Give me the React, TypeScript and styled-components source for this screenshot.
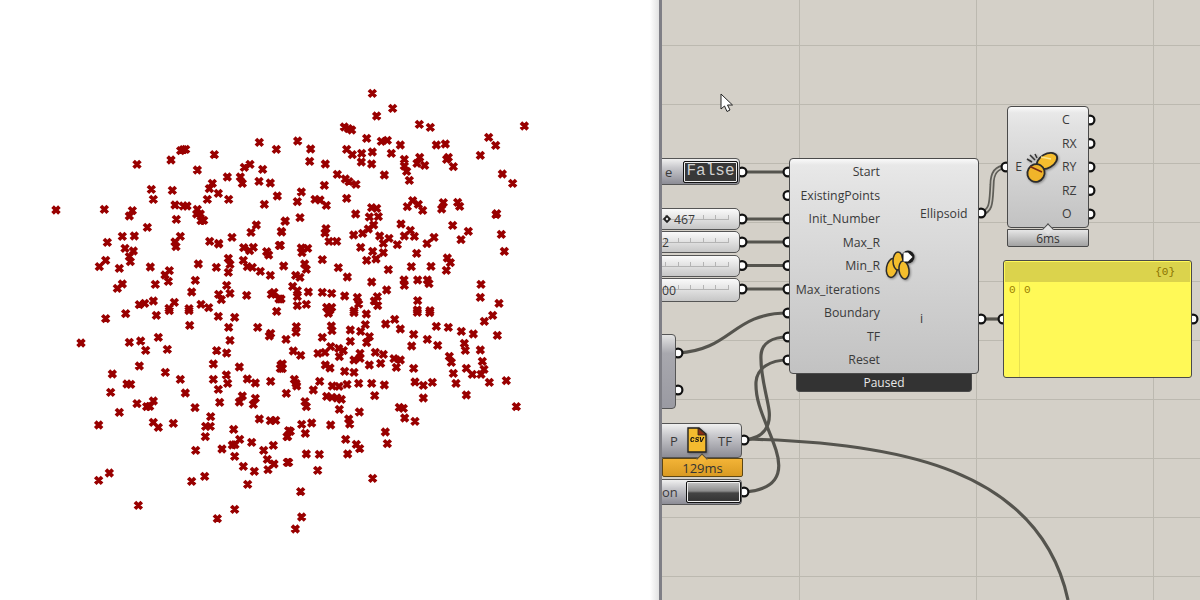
import React from "react";
import styled, { createGlobalStyle } from "styled-components";

const CANVAS_X = 662;
const LABEL_FONT = `"Open Sans", "Noto Sans", sans-serif`;

const GlobalStyle = createGlobalStyle`
  html, body {
    margin: 0;
    padding: 0;
    background: #fff;
  }
  body {
    font-family: ${LABEL_FONT};
  }
`;

// scatter points, read per quadrant: [origin x, origin y, zoomed coords at 3x]
const QUADRANTS: [number, number, string][] = [
  [40, 80, "658,187 709,208 430,209 422,212 437,208 523,224 393,240 291,253 472,270 630,253 613,262 668,268 562,291 601,291 607,310 657,304 691,309 517,310 508,326 535,340 334,328 397,331 340,358 502,358 566,358 712,348 673,373 405,375 430,378 441,378 193,388 48,390 277,392 268,408 472,388 470,402 481,402 483,422 491,421 409,418 736,423 649,435 322,442 633,457 724,454 247,469 283,468 421,469 576,472 509,484 536,490 536,492 405,486 202,487 408,500 718,496 255,505 280,513 611,503 640,502 629,512 680,515 686,525 268,530 565,535 197,541 271,545 610,541 475,552 178,560 331,561 529,562 570,553 622,560 637,562 731,558 238,565 388,572 375,585 565,577 661,574 691,586 466,601 385,604 247,612 346,613 232,625 560,616 455,636 536,643 570,640 620,646 702,637 694,643 717,657 544,659 340,663 403,667 314,670 298,674 483,673 387,685 447,686 506,683 710,694"],
  [280, 80, "277,40 338,85 290,108 418,133 451,142 733,138 193,141 205,146 215,150 626,172 53,183 260,175 304,184 322,181 361,195 469,195 496,192 647,196 92,207 200,208 217,224 245,220 277,216 334,220 601,226 373,238 419,232 89,244 136,252 244,246 275,252 373,258 411,250 434,256 500,238 505,232 520,260 380,274 172,283 313,285 667,282 196,297 207,305 228,313 388,301 698,310 133,316 64,336 52,365 105,358 120,360 139,376 200,355 398,362 415,373 382,380 428,391 490,368 485,387 533,367 539,379 275,383 290,385 227,402 650,401 648,404 295,410 268,411 60,413 15,424 518,436 363,432 281,435 138,446 135,459 391,451 265,447 565,454 5,456 248,460 221,465 299,468 327,475 373,468 403,469 462,472 664,463 147,484 170,484 543,479 441,491 352,494 310,490 1,496 64,504 83,505 242,502 66,518 278,514 310,518 410,520 673,514 127,539 260,541 288,537 502,534 511,548 74,552 11,558 175,563 394,560 453,559 79,568 325,569 499,571 47,586 60,592 202,591 275,606 372,600 373,616 413,600 442,600 447,611 603,613 38,619 320,630 52,632 85,636 127,637 155,640 194,648 232,652 292,650 601,652 52,650 3,657 413,662 236,672 283,663 79,673 52,677 293,677 657,670 140,682 155,682 150,690 222,692 412,690 450,692"],
  [40, 310, "197,26 257,11 349,16 388,2 447,2 535,19 584,22 449,46 566,52 653,52 692,70 688,78 123,99 268,97 302,93 355,82 738,88 570,91 317,121 382,118 530,122 560,129 298,168 520,162 598,171 723,165 721,175 217,192 376,187 559,195 421,208 520,208 622,207 646,219 692,214 563,220 261,222 272,223 212,247 436,249 535,238 739,250 607,258 646,265 598,276 640,283 340,273 291,281 320,290 329,289 539,277 465,293 238,307 512,320 658,327 691,332 707,331 176,345 340,337 355,352 400,340 497,349 511,349 581,358 496,380 746,362 741,380 599,388 635,397 577,405 585,404 700,406 467,421 546,417 671,421 584,439 682,448 702,462 742,457 610,469 643,484 684,479 208,489 176,511 494,499 455,514 623,523 295,586 584,598 532,626"],
  [280, 310, "145,10 222,8 259,12 412,7 449,8 638,16 613,34 344,28 317,42 361,57 469,49 505,52 544,64 580,72 49,50 48,67 154,48 156,62 211,60 242,64 256,44 652,76 401,73 18,88 127,82 211,94 268,80 260,98 442,88 553,100 395,108 473,106 556,121 601,120 152,110 176,115 40,123 62,136 114,130 135,127 190,122 178,140 286,127 310,133 508,139 514,157 607,154 240,130 222,150 240,145 342,146 361,150 268,165 302,160 136,165 150,174 7,162 7,176 349,172 401,175 612,178 194,184 222,187 559,175 577,193 603,193 520,190 43,208 119,214 50,228 48,220 157,228 177,229 201,223 236,220 275,220 313,225 405,216 430,226 457,217 528,220 628,217 679,212 100,240 19,250 284,257 140,259 156,262 171,264 184,268 430,264 559,255 75,275 79,290 358,292 370,295 709,290 178,298 238,306 206,327 209,342 374,324 405,334 65,343 95,339 152,345 31,364 23,380 76,370 316,366 197,388 322,401 229,403 239,416 79,432 118,433 203,432 26,457 113,481 278,505 62,545 65,621 46,657"],
];

const markerPath = QUADRANTS.flatMap(([ox, oy, raw]) =>
  raw.split(" ").map((pair) => {
    const [zx, zy] = pair.split(",").map(Number);
    const x = ox + zx / 3;
    const y = oy + zy / 3;
    return `M${x - 3.4} ${y - 3.4}L${x + 3.4} ${y + 3.4}M${x - 3.4} ${y + 3.4}L${x + 3.4} ${y - 3.4}`;
  })
).join("");

const Page = styled.div`
  display: flex;
  width: 1200px;
  height: 600px;
  overflow: hidden;
`;

const PlotPane = styled.div`
  flex: 0 0 659px;
  height: 600px;
  background: linear-gradient(to right, #fff 0, #fff 650px, #e2e2e2 659px);
`;

const Divider = styled.div`
  flex: 0 0 3px;
  background: #7f7f86;
`;

const Canvas = styled.div`
  position: relative;
  flex: 1;
  height: 600px;
  overflow: hidden;
  background-color: #d4d0c8;
  background-image:
    linear-gradient(to right, #bcb9b0 1px, transparent 1px),
    linear-gradient(to bottom, #bcb9b0 1px, transparent 1px);
  background-size: 177px 100%, 100% 59px;
  background-position: 137px 0, 0 45px;
`;

const WireLayer = styled.svg`
  position: absolute;
  left: 0;
  top: 0;
`;

const Block = styled.div<{ $x: number; $y: number; $w: number; $h: number }>`
  position: absolute;
  left: ${(p) => p.$x - CANVAS_X}px;
  top: ${(p) => p.$y}px;
  width: ${(p) => p.$w}px;
  height: ${(p) => p.$h}px;
  box-sizing: border-box;
  font-size: 12.3px;
  color: #3a3a3a;
`;

const ComponentNode = styled(Block)`
  display: flex;
  border: 1px solid #4a4a4a;
  border-radius: 4px;
  background: linear-gradient(to bottom, #fafafa 0, #e8e8e8 6px, #e2e2e2 15%, #c2c2c2 100%);
`;

const InputColumn = styled.div<{ $w: number }>`
  flex: 0 0 ${(p) => p.$w}px;
  display: flex;
  flex-direction: column;
  align-items: flex-end;
  justify-content: center;
`;

const PortLabel = styled.div<{ $h?: number }>`
  height: ${(p) => p.$h ?? 23.5}px;
  line-height: ${(p) => p.$h ?? 23.5}px;
  white-space: nowrap;
`;

const IconSlot = styled.div<{ $w: number }>`
  flex: 0 0 ${(p) => p.$w}px;
  display: flex;
  align-items: center;
  justify-content: center;
`;

const OutputColumn = styled.div<{ $gap?: number; $top?: number }>`
  display: flex;
  flex-direction: column;
  justify-content: ${(p) => (p.$top === undefined ? "center" : "flex-start")};
  padding-top: ${(p) => p.$top ?? 0}px;
  gap: ${(p) => p.$gap ?? 0}px;
`;

const StatusBar = styled(Block)<{ $tone: "dark" | "gray" | "orange" }>`
  display: flex;
  align-items: center;
  justify-content: center;
  font-size: ${(p) => (p.$tone === "orange" ? 13 : 12)}px;
  color: ${(p) => (p.$tone === "dark" ? "#e8e8e8" : "#333")};
  background: ${(p) =>
    p.$tone === "dark"
      ? "#333"
      : p.$tone === "orange"
        ? "linear-gradient(to bottom, #f3b437, #d99a22)"
        : "linear-gradient(to bottom, #e6e6e6, #a2a2a2)"};
  border: 1px solid ${(p) => (p.$tone === "orange" ? "#5c4614" : "#4a4a4a")};
  border-top: ${(p) => (p.$tone === "dark" ? "none" : undefined)};
  border-radius: ${(p) => (p.$tone === "dark" ? "0 0 4px 4px" : "0 0 2px 2px")};
`;

const Notch = styled(Block)<{ $fill: string }>`
  transform: rotate(45deg);
  background: ${(p) => p.$fill};
  border-top: 1px solid #4a4a4a;
  border-left: 1px solid #4a4a4a;
`;

const Capsule = styled(Block)<{ $dim?: boolean }>`
  display: flex;
  align-items: center;
  font-size: 13px;
  border: 1px solid #555;
  border-radius: 4px;
  background: ${(p) =>
    p.$dim
      ? "linear-gradient(to bottom, #e4e4e4 0, #a8a8ae 25%, #9a9aa2 100%)"
      : "linear-gradient(to bottom, #f0f0f0 0, #c8c8cc 35%, #8c8c95 100%)"};
`;

const CapsuleName = styled.span<{ $pad: number; $w?: number }>`
  box-sizing: border-box;
  padding-left: ${(p) => p.$pad}px;
  flex: ${(p) => (p.$w ? `0 0 ${p.$w}px` : "1")};
  white-space: nowrap;
`;

const ToggleFace = styled.div`
  flex: 0 0 55px;
  height: 22px;
  margin-right: 1px;
  box-sizing: border-box;
  border: 1px solid #111;
  outline: 1px solid #eee;
  outline-offset: -2px;
  border-radius: 2px;
  background: #383838;
  color: #cfcfcf;
  font: 16px/19px "Liberation Mono", monospace;
  text-align: center;
`;

const ButtonFace = styled.div`
  flex: 0 0 55px;
  height: 22px;
  box-sizing: border-box;
  border: 1px solid #111;
  outline: 1px solid #eee;
  outline-offset: -2px;
  border-radius: 2px;
  background: linear-gradient(to bottom, #c4c4c4 0, #8c8c8c 45%, #444 55%, #333 100%);
`;

const SliderBody = styled(Block)`
  display: flex;
  align-items: center;
  border: 1px solid #555;
  border-radius: 5px;
  background: linear-gradient(to bottom, #fafafa 0, #e6e6e6 40%, #c6c6c6 100%);
`;

const SliderRuler = styled.div`
  position: absolute;
  right: 10px;
  top: 6px;
  width: 66px;
  height: 4px;
  border-bottom: 1px solid #b4b4b4;
  border-right: 1px solid #b4b4b4;
  background: repeating-linear-gradient(
    to left,
    transparent 0,
    transparent 11.5px,
    #b4b4b4 11.5px,
    #b4b4b4 12.5px
  );
`;

const SliderValue = styled.span<{ $pad: number }>`
  position: relative;
  padding-left: ${(p) => p.$pad}px;
  font-size: 12.3px;
`;

const SliderGrip = styled.span`
  position: absolute;
  left: 13px;
  top: 7px;
  width: 6px;
  height: 6px;
  box-sizing: border-box;
  background: #fff;
  border: 2px solid #222;
  transform: rotate(45deg);
`;

const Panel = styled(Block)`
  border: 1px solid #4a4a4a;
  border-radius: 3px;
  background: #fff957;
  padding: 1px;
`;

const PanelHeader = styled.div`
  height: 20px;
  background: #dbd34c;
  color: #8a7200;
  font: 11px/20px "Liberation Mono", monospace;
  text-align: right;
  padding-right: 15px;
`;

const PanelRow = styled.div`
  display: flex;
  height: 95px;
  color: #9a8000;
  font: 11px/14px "Liberation Mono", monospace;
`;

const PanelIndex = styled.div`
  flex: 0 0 15px;
  box-sizing: border-box;
  padding: 1px 0 0 4px;
  border-right: 1px solid #e6df50;
`;

const PanelValue = styled.div`
  padding: 1px 0 0 4px;
`;

const IconSvg = styled.svg`
  filter: drop-shadow(1px 1px 1px rgba(0, 0, 0, 0.35));
`;

const Cursor = styled.svg`
  position: absolute;
  left: ${720 - CANVAS_X}px;
  top: 93px;
`;

const WIRE = "#55544e";

const Wires = () => {
  const straight = [
    "M742 172H788",
    "M742 219H788",
    "M742 242H788",
    "M742 265.5H788",
    "M742 289H788",
    "M981 319H1002",
  ];
  const curves = [
    "M678 353C732 350 732 313 788 313",
    "M744 440C765 438 771 425 769 410C767 395 760 375 761 355C762 343 772 337 788 337",
    "M744 492C775 490 784 475 776 450C768 425 755 405 756 382C757 368 770 360 788 360",
    "M744 439C900 442 1040 470 1068 600",
  ];
  const ports = [
    [788, 172], [788, 195.5], [788, 219], [788, 242], [788, 265.5], [788, 289], [788, 313], [788, 337], [788, 360],
    [742, 172], [742, 219], [742, 242], [742, 265.5], [742, 289],
    [678, 353], [678, 390], [744, 440], [744, 492],
    [981, 213], [981, 319], [1006, 167],
    [1090, 120], [1090, 143.5], [1090, 167], [1090, 190.5], [1090, 214],
    [1003, 319], [1193, 319],
  ];
  const doubled = "M981 213C992 212 991 200 992 185C992 172 997 167 1006 167";
  return (
    <WireLayer width={538} height={600} viewBox={`${CANVAS_X} 0 538 600`}>
      {[...straight, ...curves].map((d) => (
        <path key={d} d={d} fill="none" stroke={WIRE} strokeWidth={3.2} />
      ))}
      <path d={doubled} fill="none" stroke="#5f5e58" strokeWidth={5} />
      <path d={doubled} fill="none" stroke="#c9c6be" strokeWidth={1.5} />
      {ports.map(([x, y]) => (
        <circle key={`${x}-${y}`} cx={x} cy={y} r={4.4} fill="#fff" stroke="#111" strokeWidth={2.2} />
      ))}
    </WireLayer>
  );
};

const EllipsesIcon = () => (
  <IconSvg width={36} height={36} viewBox="0 0 36 36">
    <g stroke="#2c2c2c" strokeWidth={1.5} fill="#f3bd2c">
      <ellipse cx={10} cy={20} rx={5.5} ry={9.5} transform="rotate(10 10 20)" />
      <ellipse cx={16} cy={13} rx={5} ry={9} />
      <ellipse cx={22} cy={22} rx={5} ry={9} transform="rotate(-8 22 22)" />
    </g>
    <circle cx={26} cy={9} r={6.5} fill="#1c1c1c" />
    <path d="M21.5 4.5H26L30.5 9L26 13.5H21.5Z" fill="#fff" />
  </IconSvg>
);

const CapsulesIcon = () => (
  <IconSvg width={36} height={34} viewBox="0 0 36 34">
    <path d="M3 9L8 12M6 5L11 10M11 4L13 8" stroke="#333" strokeWidth={1.5} fill="none" />
    <g stroke="#2c2c2c" strokeWidth={1.8}>
      <ellipse cx={23} cy={11} rx={11} ry={7} transform="rotate(-30 23 11)" fill="#f5bd2e" />
      <ellipse cx={12} cy={23} rx={8.5} ry={9} transform="rotate(30 12 23)" fill="#f0b42a" />
    </g>
    <path d="M6 16.5L18 22" stroke="#7a2a10" strokeWidth={1.6} fill="none" />
    <path d="M17 7L27 9" stroke="#fde58a" strokeWidth={1.5} fill="none" />
  </IconSvg>
);

const CsvIcon = () => (
  <IconSvg width={20} height={27} viewBox="0 0 20 27">
    <path d="M1 1H12L19 7V25H1Z" fill="#f4bb2f" stroke="#222" strokeWidth={1.4} />
    <path d="M11 1L19 8H11Z" fill="#8a2c12" stroke="#222" strokeWidth={0.8} />
    <text x={10} y={15} textAnchor="middle" fontFamily="Liberation Sans, sans-serif" fontSize={8.5} fontWeight={700} fontStyle="italic" fill="#111">
      csv
    </text>
  </IconSvg>
);

const SLIDERS = [
  { y: 208, h: 22, value: "467", pad: 23, grip: true },
  { y: 231, h: 22, value: "2", pad: 11 },
  { y: 255, h: 22, value: "", pad: 11 },
  { y: 278, h: 24, value: "00", pad: 11 },
];

const INPUTS = ["Start", "ExistingPoints", "Init_Number", "Max_R", "Min_R", "Max_iterations", "Boundary", "TF", "Reset"];
const OUTPUTS = ["C", "RX", "RY", "RZ", "O"];

export default function App() {
  return (
    <Page>
      <GlobalStyle />
      <PlotPane>
        <svg width={659} height={600}>
          <path d={markerPath} stroke="#990000" strokeWidth={3.7} fill="none" />
        </svg>
      </PlotPane>
      <Divider />
      <Canvas>
        <Wires />

        <Capsule $x={650} $y={158} $w={90} $h={27}>
          <CapsuleName $pad={14}>e</CapsuleName>
          <ToggleFace>False</ToggleFace>
        </Capsule>

        {SLIDERS.map((s) => (
          <SliderBody key={s.y} $x={650} $y={s.y} $w={90} $h={s.h}>
            <SliderRuler />
            {s.grip && <SliderGrip />}
            <SliderValue $pad={s.pad}>{s.value}</SliderValue>
          </SliderBody>
        ))}

        <Capsule $dim $x={650} $y={334} $w={26} $h={75} />

        <Capsule $x={650} $y={423} $w={92} $h={35}>
          <CapsuleName $pad={19} $w={36}>P</CapsuleName>
          <IconSlot $w={20}>
            <CsvIcon />
          </IconSlot>
          <CapsuleName $pad={11}>TF</CapsuleName>
        </Capsule>
        <StatusBar $x={662} $y={458} $w={81} $h={19} $tone="orange">129ms</StatusBar>
        <Notch $x={698} $y={455} $w={8} $h={8} $fill="#f3b437" />

        <Capsule $x={650} $y={479} $w={92} $h={26}>
          <CapsuleName $pad={11}>on</CapsuleName>
          <ButtonFace />
        </Capsule>

        <ComponentNode $x={789} $y={158} $w={190} $h={216}>
          <InputColumn $w={90}>
            {INPUTS.map((name) => (
              <PortLabel key={name}>{name}</PortLabel>
            ))}
          </InputColumn>
          <IconSlot $w={40}>
            <EllipsesIcon />
          </IconSlot>
          <OutputColumn $top={43} $gap={81}>
            <PortLabel $h={24}>Ellipsoid</PortLabel>
            <PortLabel $h={24}>i</PortLabel>
          </OutputColumn>
        </ComponentNode>
        <StatusBar $x={796} $y={374} $w={176} $h={18} $tone="dark">Paused</StatusBar>

        <ComponentNode $x={1007} $y={106} $w={82} $h={122}>
          <InputColumn $w={14}>
            <PortLabel>E</PortLabel>
          </InputColumn>
          <IconSlot $w={40}>
            <CapsulesIcon />
          </IconSlot>
          <OutputColumn>
            {OUTPUTS.map((name) => (
              <PortLabel key={name}>{name}</PortLabel>
            ))}
          </OutputColumn>
        </ComponentNode>
        <StatusBar $x={1007} $y={229} $w={82} $h={18} $tone="gray">6ms</StatusBar>
        <Notch $x={1044} $y={225} $w={8} $h={8} $fill="#e4e4e4" />

        <Panel $x={1003} $y={260} $w={189} $h={118}>
          <PanelHeader>{"{0}"}</PanelHeader>
          <PanelRow>
            <PanelIndex>0</PanelIndex>
            <PanelValue>0</PanelValue>
          </PanelRow>
        </Panel>

        <Cursor width={14} height={20} viewBox="0 0 14 20">
          <path d="M1 1V16L4.5 13L7 18.5L10 17L7.5 12H12.5Z" fill="#fff" stroke="#222" strokeWidth={1} />
        </Cursor>
      </Canvas>
    </Page>
  );
}
